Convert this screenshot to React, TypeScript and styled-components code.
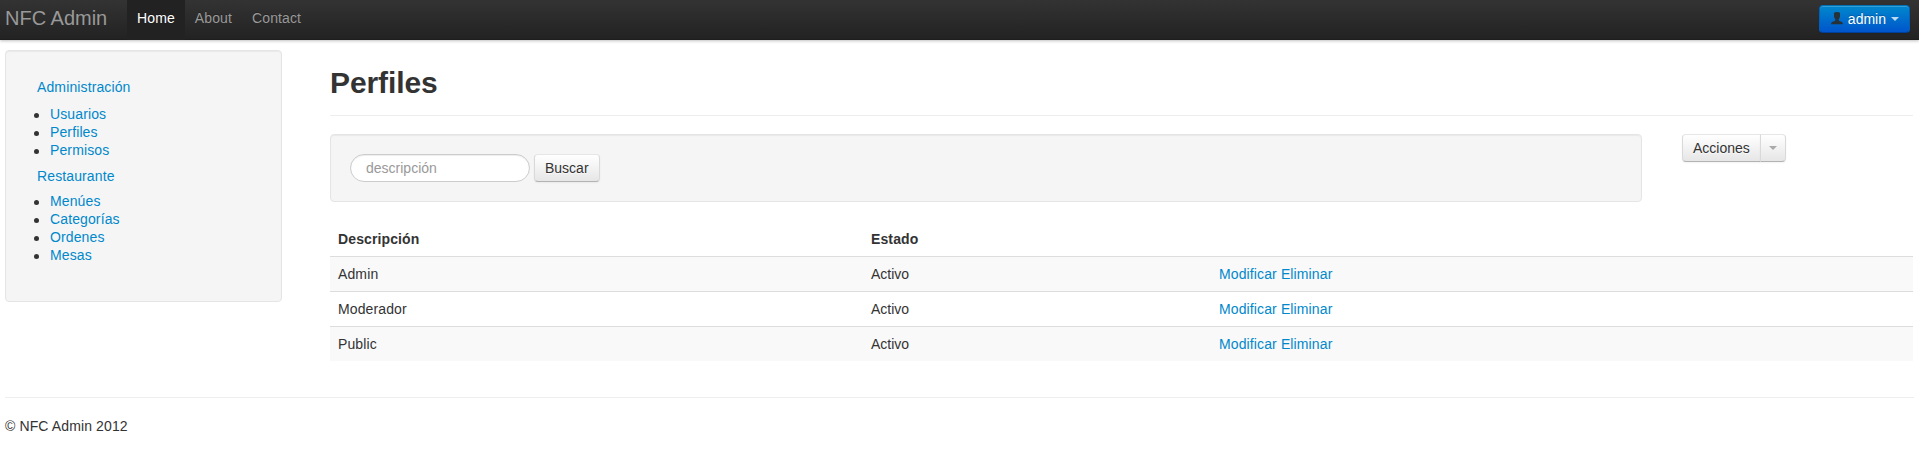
import React from "react";
import styled, { createGlobalStyle, css } from "styled-components";

const GlobalStyle = createGlobalStyle`
  *, *::before, *::after { box-sizing: border-box; }
  body {
    margin: 0;
    background: #fff;
    color: #333;
    font: 14px/18px "Liberation Sans", Arial, sans-serif;
    letter-spacing: 0.12px;
  }
  button, input { font: inherit; }
`;

const Navbar = styled.header`
  display: flex;
  align-items: flex-start;
  height: 40px;
  padding: 0 9px 0 5px;
  background: linear-gradient(to bottom, #333, #222);
  box-shadow: 0 1px 3px rgba(0, 0, 0, 0.25), inset 0 -1px 0 rgba(0, 0, 0, 0.1);
`;

const Brand = styled.a`
  width: 122px;
  padding: 8px 0 12px;
  color: #999;
  font-size: 20px;
  line-height: 20px;
  letter-spacing: 0;
`;

const Nav = styled.nav`
  display: flex;
  flex: 1;
`;

const NavLink = styled.a<{ $active?: boolean }>`
  height: 40px;
  padding: 9px 10px 12px;
  line-height: 19px;
  color: ${(p) => (p.$active ? "#fff" : "#999")};
  background: ${(p) => (p.$active ? "#222" : "transparent")};
  text-shadow: 0 -1px 0 rgba(0, 0, 0, 0.25);
`;

const Button = styled.button<{ $variant?: "primary" }>`
  display: inline-flex;
  align-items: center;
  height: 28px;
  padding: 0 10px;
  border: 1px solid;
  border-color: #e6e6e6 #d9d9d9 #b3b3b3;
  border-radius: 4px;
  color: #333;
  line-height: 18px;
  text-shadow: 0 1px 1px rgba(255, 255, 255, 0.75);
  background: linear-gradient(to bottom, #fff, #e6e6e6);
  box-shadow: inset 0 1px 0 rgba(255, 255, 255, 0.2), 0 1px 2px rgba(0, 0, 0, 0.05);
  ${(p) =>
    p.$variant === "primary" &&
    css`
      margin-top: 5px;
      color: #fff;
      border-color: #0071b3 #0060bb #003f99;
      text-shadow: 0 -1px 0 rgba(0, 0, 0, 0.25);
      background: linear-gradient(to bottom, #0088cc, #0055cc);
    `}
`;

const UserIcon = styled.svg`
  width: 14px;
  height: 14px;
  margin: -2px 4px 0 0;
  fill: #26323a;
`;

const Caret = styled.span<{ $light?: boolean }>`
  border: 4px solid transparent;
  border-bottom: 0;
  border-top-color: ${(p) => (p.$light ? "#fff" : "#000")};
  opacity: ${(p) => (p.$light ? 0.75 : 0.3)};
  margin-left: ${(p) => (p.$light ? "5px" : "0")};
`;

const Body = styled.div`
  display: flex;
  align-items: flex-start;
  gap: 48px;
  padding: 10px 6px 0 5px;
`;

const Well = styled.div`
  border: 1px solid #e5e5e5;
  border-radius: 4px;
  background: #f5f5f5;
  box-shadow: inset 0 1px 1px rgba(0, 0, 0, 0.05);
`;

const Sidebar = styled(Well).attrs({ as: "aside" })`
  flex: none;
  width: 277px;
  height: 252px;
  padding: 27px 31px;
`;

const Link = styled.a`
  color: #0088cc;
`;

const SectionLink = styled(Link)`
  display: block;
`;

const MenuList = styled.ul<{ $gap: number }>`
  margin: ${(p) => p.$gap}px 0 8px -3px;
  padding: 0;
  list-style: none;
`;

const MenuItem = styled.li`
  display: flex;
  align-items: center;
  gap: 11px;
  height: 18px;
  &::before {
    content: "";
    width: 5px;
    height: 5px;
    margin-top: 2px;
    border-radius: 50%;
    background: #333;
  }
`;

const Main = styled.main`
  flex: 1;
  min-width: 0;
`;

const PageHeader = styled.div`
  height: 66px;
  border-bottom: 1px solid #eee;
  h1 {
    margin: 0;
    padding-top: 15px;
    font-size: 30px;
    line-height: 36px;
    letter-spacing: -0.1px;
  }
`;

const Tools = styled.div`
  display: flex;
  align-items: flex-start;
  gap: 40px;
  margin: 18px 0 19px;
`;

const SearchForm = styled(Well)`
  display: flex;
  gap: 4px;
  width: 1312px;
  height: 68px;
  padding: 19px;
`;

const SearchInput = styled.input`
  width: 180px;
  height: 28px;
  padding: 0 15px;
  border: 1px solid #ccc;
  border-radius: 14px;
  background: #fff;
  box-shadow: inset 0 1px 1px rgba(0, 0, 0, 0.075);
  &::placeholder { color: #999; opacity: 1; }
`;

const ButtonGroup = styled.div`
  display: flex;
  ${Button}:first-child { border-radius: 4px 0 0 4px; }
  ${Button}:last-child {
    margin-left: -1px;
    padding: 0 8px;
    border-radius: 0 4px 4px 0;
  }
`;

const Table = styled.table`
  width: 100%;
  table-layout: fixed;
  border-collapse: separate;
  border-spacing: 0;
  th, td {
    height: 35px;
    padding: 8px;
    text-align: left;
    vertical-align: top;
  }
  th { vertical-align: bottom; }
  td { border-top: 1px solid #ddd; }
  td:nth-child(2) { letter-spacing: 0; }
  tbody tr:nth-child(odd) td { background: #f9f9f9; }
`;

const Footer = styled.footer`
  margin: 36px 5px 0;
  padding-top: 19px;
  border-top: 1px solid #eee;
`;

const sections = [
  { title: "Administración", gap: 9, items: ["Usuarios", "Perfiles", "Permisos"] },
  { title: "Restaurante", gap: 7, items: ["Menúes", "Categorías", "Ordenes", "Mesas"] },
];
const profiles = ["Admin", "Moderador", "Public"];

export default function App() {
  return (
    <>
      <GlobalStyle />
      <Navbar>
        <Brand>NFC Admin</Brand>
        <Nav>
          <NavLink $active>Home</NavLink>
          <NavLink>About</NavLink>
          <NavLink>Contact</NavLink>
        </Nav>
        <Button $variant="primary">
          <UserIcon viewBox="0 0 14 14">
            <path d="M4 1.8Q5 1 7 1Q9.200 1 10 1.800V5.500Q9.800 7.300 8.700 8.300V9.500Q9.500 10.300 11.500 10.800Q13 11.300 13 13.300H1Q1 11.300 2.500 10.800Q4.500 10.300 5.300 9.500V8.300Q4.200 7.300 4 5.500Z" />
          </UserIcon>
          admin
          <Caret $light />
        </Button>
      </Navbar>
      <Body>
        <Sidebar>
          {sections.map((s) => (
            <React.Fragment key={s.title}>
              <SectionLink>{s.title}</SectionLink>
              <MenuList $gap={s.gap}>
                {s.items.map((item) => (
                  <MenuItem key={item}><Link>{item}</Link></MenuItem>
                ))}
              </MenuList>
            </React.Fragment>
          ))}
        </Sidebar>
        <Main>
          <PageHeader><h1>Perfiles</h1></PageHeader>
          <Tools>
            <SearchForm>
              <SearchInput placeholder="descripción" />
              <Button>Buscar</Button>
            </SearchForm>
            <ButtonGroup>
              <Button>Acciones</Button>
              <Button aria-label="Acciones"><Caret /></Button>
            </ButtonGroup>
          </Tools>
          <Table>
            <colgroup>
              <col width="533" />
              <col width="348" />
              <col />
            </colgroup>
            <thead>
              <tr><th>Descripción</th><th>Estado</th><th /></tr>
            </thead>
            <tbody>
              {profiles.map((name) => (
                <tr key={name}>
                  <td>{name}</td>
                  <td>Activo</td>
                  <td><Link>Modificar</Link> <Link>Eliminar</Link></td>
                </tr>
              ))}
            </tbody>
          </Table>
        </Main>
      </Body>
      <Footer>© NFC Admin 2012</Footer>
    </>
  );
}
